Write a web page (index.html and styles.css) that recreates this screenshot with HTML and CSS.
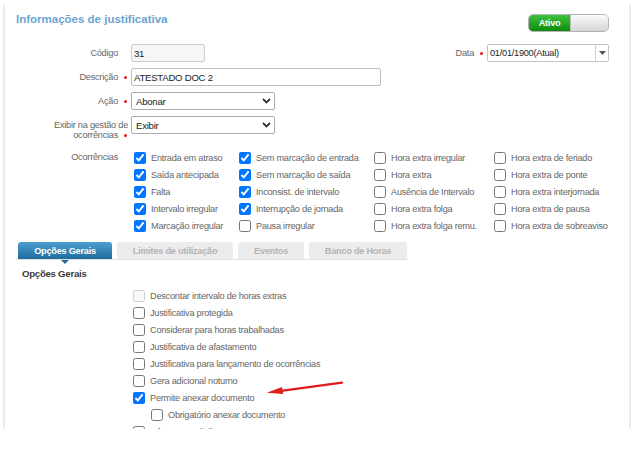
FILE: index.html
```html
<!DOCTYPE html>
<html lang="pt-BR">
<head>
<meta charset="utf-8">
<title>Informações de justificativa</title>
<link rel="stylesheet" href="styles.css">
</head>
<body>
<div class="panel">
  <div class="header">
    <h1 class="title">Informações de justificativa</h1>
    <div class="toggle"><span class="toggle-on">Ativo</span><span class="toggle-knob"></span></div>
  </div>

  <div class="row row-first">
    <div class="field">
      <span class="lbl">Código<span class="req hidden"></span></span>
      <input class="input input-code ctl" type="text" value="31" readonly>
    </div>
    <div class="field">
      <span class="lbl-date">Data<span class="req"></span></span>
      <div class="select-date">
        <span class="sd-text">01/01/1900(Atual)</span>
        <span class="sd-btn"><svg width="7" height="4" viewBox="0 0 7 4"><path d="M0 0H7L3.5 4Z" fill="#555"/></svg></span>
      </div>
    </div>
  </div>

  <div class="row">
    <span class="lbl">Descrição<span class="req"></span></span>
    <input class="input input-desc ctl" type="text" value="ATESTADO DOC 2">
  </div>

  <div class="row">
    <span class="lbl">Ação<span class="req"></span></span>
    <div class="select ctl"><span>Abonar</span><svg width="9" height="6" viewBox="0 0 9 6"><path d="M1 1L4.5 4.5L8 1" fill="none" stroke="#333" stroke-width="1.8"/></svg></div>
  </div>

  <div class="row row-tall">
    <span class="lbl lbl-two">Exibir na gestão de<br>ocorrências<span class="req"></span></span>
    <div class="select ctl"><span>Exibir</span><svg width="9" height="6" viewBox="0 0 9 6"><path d="M1 1L4.5 4.5L8 1" fill="none" stroke="#333" stroke-width="1.8"/></svg></div>
  </div>

  <div class="occ">
    <span class="lbl lbl-occ">Ocorrências<span class="req hidden"></span></span>
    <div class="occ-grid">
      <label class="chk"><input type="checkbox" checked><span>Entrada em atraso</span></label>
      <label class="chk"><input type="checkbox" checked><span>Sem marcação de entrada</span></label>
      <label class="chk"><input type="checkbox"><span>Hora extra irregular</span></label>
      <label class="chk"><input type="checkbox"><span>Hora extra de feriado</span></label>

      <label class="chk"><input type="checkbox" checked><span>Saída antecipada</span></label>
      <label class="chk"><input type="checkbox" checked><span>Sem marcação de saída</span></label>
      <label class="chk"><input type="checkbox"><span>Hora extra</span></label>
      <label class="chk"><input type="checkbox"><span>Hora extra de ponte</span></label>

      <label class="chk"><input type="checkbox" checked><span>Falta</span></label>
      <label class="chk"><input type="checkbox" checked><span>Inconsist. de intervalo</span></label>
      <label class="chk"><input type="checkbox"><span>Ausência de Intervalo</span></label>
      <label class="chk"><input type="checkbox"><span>Hora extra interjornada</span></label>

      <label class="chk"><input type="checkbox" checked><span>Intervalo irregular</span></label>
      <label class="chk"><input type="checkbox" checked><span>Interrupção de jornada</span></label>
      <label class="chk"><input type="checkbox"><span>Hora extra folga</span></label>
      <label class="chk"><input type="checkbox"><span>Hora extra de pausa</span></label>

      <label class="chk"><input type="checkbox" checked><span>Marcação irregular</span></label>
      <label class="chk"><input type="checkbox"><span>Pausa irregular</span></label>
      <label class="chk"><input type="checkbox"><span>Hora extra folga remu.</span></label>
      <label class="chk"><input type="checkbox"><span>Hora extra de sobreaviso</span></label>
    </div>
  </div>

  <div class="tabs">
    <div class="tab tab-1 active">Opções Gerais</div>
    <div class="tab tab-2">Limites de utilização</div>
    <div class="tab tab-3">Eventos</div>
    <div class="tab tab-4">Banco de Horas</div>
  </div>

  <div class="section-title">Opções Gerais</div>

  <div class="options">
    <label class="chk opt"><input type="checkbox" disabled><span>Descontar intervalo de horas extras</span></label>
    <label class="chk opt"><input type="checkbox"><span>Justificativa protegida</span></label>
    <label class="chk opt"><input type="checkbox"><span>Considerar para horas trabalhadas</span></label>
    <label class="chk opt"><input type="checkbox"><span>Justificativa de afastamento</span></label>
    <label class="chk opt"><input type="checkbox"><span>Justificativa para lançamento de ocorrências</span></label>
    <label class="chk opt"><input type="checkbox"><span>Gera adicional noturno</span></label>
    <label class="chk opt"><input type="checkbox" checked><span>Permite anexar documento</span></label>
    <label class="chk opt sub"><input type="checkbox"><span>Obrigatório anexar documento</span></label>
    <label class="chk opt"><input type="checkbox"><span>Informar medição</span></label>
  </div>
</div>

<svg class="arrow" width="84" height="24" viewBox="0 0 84 24">
  <path d="M19 14.8L80 6.6" stroke="#e01b1b" stroke-width="2.2" stroke-linecap="round"/>
  <path d="M4.7 16.7L20.1 11.1L21.1 18.1Z" fill="#e01b1b"/>
</svg>
</body>
</html>
```

FILE: styles.css
```css
* { box-sizing: border-box; }

html, body {
  margin: 0;
  padding: 0;
  background: #fff;
}

body {
  position: relative;
  width: 639px;
  height: 458px;
  overflow: hidden;
  font-family: "Liberation Sans", Arial, sans-serif;
  font-size: 9.2px;
  letter-spacing: -0.25px;
  color: #666;
}

.panel {
  margin: 5px 0 0 3px;
  width: 628px;
  height: 424px;
  border-left: 2px solid #e4ecf4;
  border-right: 2px solid #e4ecf4;
  padding: 7px 20px 0 11px;
  overflow: hidden;
}

/* header */
.header {
  display: flex;
  justify-content: space-between;
  align-items: flex-start;
  height: 20px;
}

.title {
  margin: 0;
  font-size: 11.5px;
  line-height: 14px;
  font-weight: bold;
  letter-spacing: 0;
  color: #6ba4d3;
}

.toggle {
  margin-top: 2px;
  width: 81px;
  height: 18px;
  display: flex;
  border: 1px solid #b4b4b4;
  border-radius: 5px;
  overflow: hidden;
}

.toggle-on {
  width: 41px;
  display: flex;
  align-items: center;
  justify-content: center;
  background: linear-gradient(#3ec23e, #0e8b0e);
  color: #fff;
  font-weight: bold;
}

.toggle-knob {
  flex: 1;
  background: linear-gradient(#fbfbfb, #d5d5d5);
  border-left: 1px solid #bdbdbd;
}

/* form rows */
.row {
  display: flex;
  align-items: center;
  height: 18px;
  margin-top: 6px;
}

.row-first {
  margin-top: 12px;
  justify-content: space-between;
}

.field {
  display: flex;
  align-items: center;
}

.lbl {
  flex: none;
  width: 112px;
  text-align: right;
  line-height: 10px;
  color: #666;
}

.row-tall {
  align-items: flex-start;
  height: 24px;
}

.lbl-two {
  padding-top: 4px;
}

.req {
  display: inline-block;
  width: 3px;
  height: 3px;
  margin: 0 1px 1px 6px;
  border-radius: 50%;
  background: #e8141a;
  vertical-align: middle;
}

.req.hidden {
  visibility: hidden;
}

.ctl {
  margin-left: 3px;
}

.input {
  height: 18px;
  margin-top: 0;
  margin-bottom: 0;
  margin-right: 0;
  padding: 0 2px;
  border: 1px solid #bcbcbc;
  border-radius: 2px;
  font-family: "Liberation Sans", Arial, sans-serif;
  font-size: 9.6px;
  letter-spacing: -0.25px;
  color: #222;
  background: #fff;
  outline: none;
}

.input-code {
  width: 74px;
  background: #f6f6f6;
  border-color: #cfcfcf;
}

.input-desc {
  width: 250px;
}

.select {
  width: 144px;
  height: 18px;
  display: flex;
  align-items: center;
  justify-content: space-between;
  padding: 0 3px 0 4px;
  border: 1px solid #ababab;
  border-radius: 2px;
  font-size: 9.6px;
  color: #222;
}

.lbl-date {
  color: #666;
}

.select-date {
  width: 122px;
  height: 18px;
  margin-left: 3px;
  display: flex;
  border: 1px solid #c4c4c4;
  border-radius: 2px;
}

.sd-text {
  flex: 1;
  display: flex;
  align-items: center;
  padding-left: 2px;
  color: #222;
}

.sd-btn {
  width: 13px;
  display: flex;
  align-items: center;
  justify-content: center;
  border-left: 1px solid #d2d2d2;
}

/* occurrences */
.occ {
  display: flex;
  margin-top: 9px;
}

.lbl-occ {
  line-height: 17px;
}

.occ-grid {
  display: grid;
  grid-template-columns: 105px 135px 120px auto;
  grid-auto-rows: 17px;
  margin-left: 6px;
}

.chk {
  display: flex;
  align-items: center;
  gap: 5px;
  white-space: nowrap;
  color: #666;
}

.chk input {
  flex: none;
  width: 12px;
  height: 12px;
  margin: 0;
}

/* tabs */
.tabs {
  display: flex;
  gap: 5px;
  width: 392px;
  margin-top: 8px;
  padding-left: 2px;
  border-bottom: 1px solid #e0e0e0;
}

.tab {
  height: 17px;
  display: flex;
  align-items: center;
  justify-content: center;
  border-radius: 3px 3px 0 0;
  background: #ececec;
  color: #b4b4b4;
  font-weight: bold;
}

.tab-1 { width: 94px; }
.tab-2 { width: 116px; }
.tab-3 { width: 66px; }
.tab-4 { width: 98px; }

.tab.active {
  position: relative;
  background: linear-gradient(#4ea0d2, #1d6b9c);
  color: #fff;
}

.tab.active::after {
  content: "";
  position: absolute;
  left: 50%;
  bottom: -5px;
  margin-left: -4.5px;
  border-left: 4.5px solid transparent;
  border-right: 4.5px solid transparent;
  border-top: 4px solid #1d6b9c;
}

.section-title {
  margin: 8px 0 0 6px;
  font-size: 9.6px;
  line-height: 12px;
  font-weight: bold;
  color: #3a3a3a;
}

.options {
  margin: 7px 0 0 117px;
}

.opt {
  height: 17px;
}

.opt.sub {
  margin-left: 18px;
}

.arrow {
  position: absolute;
  left: 262px;
  top: 376px;
}
```
